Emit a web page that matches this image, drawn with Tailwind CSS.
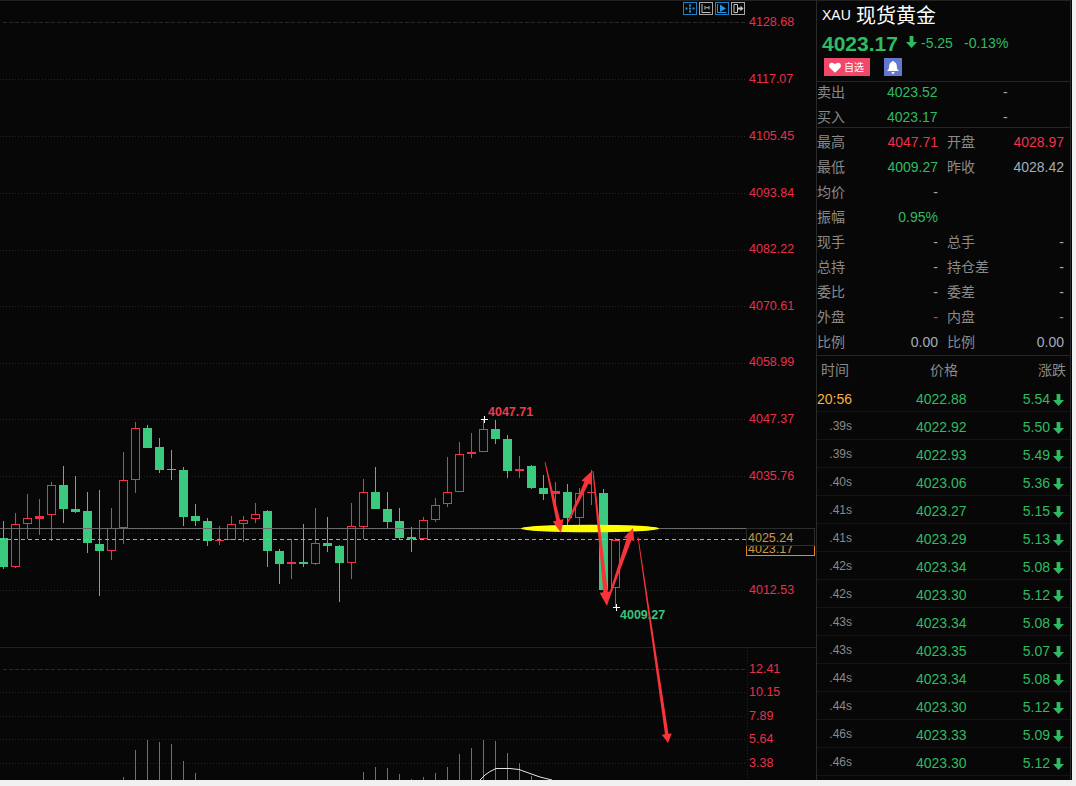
<!DOCTYPE html>
<html lang="zh-CN">
<head>
    <meta charset="UTF-8">
    <title>XAU 现货黄金</title>
    <script src="https://cdn.jsdelivr.net/npm/@tailwindcss/browser@4"></script>
</head>
<body class="bg-[#f0f0f0] [font-family:'Liberation_Sans','Noto_Sans_CJK_SC',sans-serif] text-[14px] overflow-hidden">
<svg class="hidden">
    <symbol id="down" viewBox="0 0 11 12"><path d="M3.6 0h3.8v6H11L5.5 12 0 6h3.6z" fill="#2fbb62"/></symbol>
</svg>

<div class="flex w-[1072px] h-[780px] bg-[#070707] overflow-hidden">

    <!-- Chart -->
    <div class="w-[816px] h-[780px] shrink-0">
        <svg width="816" height="780" class="block">
            <rect x="0" y="0" width="816" height="1" fill="#222"/>
            <g id="grid"></g>
            <g id="candles"></g>
            <g id="volume"></g>
            <path id="macd" d="M480 780L485 775L490 771.5L496 768.5L510 768.5L519 769.5L530 773.5L540 777L552 780" fill="none" stroke="#e5e5e5"/>
            <rect x="0" y="528" width="746" height="1" fill="#6b6b6b"/>
            <line x1="0" y1="539.5" x2="746" y2="539.5" stroke="#d9a24a" stroke-dasharray="4 3"/>

            <!-- high / low markers -->
            <path d="M481 419.5h7M484.5 416v7M613 607.5h7M616.5 604v7" stroke="#fff"/>
            <text x="488" y="416" font-size="12.5" font-weight="700" fill="#ee3a50">4047.71</text>
            <text x="620" y="619" font-size="12.5" font-weight="700" fill="#35c47c">4009.27</text>

            <ellipse cx="590" cy="528.5" rx="69" ry="3.8" fill="#ffff00"/>
            <g id="arrows"></g>

            <g id="axis" font-size="12.5" fill="#e8304a"></g>
            <rect x="746.5" y="541.5" width="68" height="14" fill="#070707" stroke="#e8862a"/>
            <text x="748" y="553" font-size="12.5" fill="#c8974a">4023.17</text>
            <rect x="746.5" y="528.5" width="68" height="17" fill="#070707" stroke="#2c2c2c"/>
            <text x="748" y="541.5" font-size="12.5" fill="#c8974a">4025.24</text>

            <!-- toolbar -->
            <g fill="none">
                <rect x="683.5" y="2.5" width="13" height="12" stroke="#1c7fc9"/>
                <path d="M689 4.5h2v2h-2zM689 10.5h2v2h-2zM685.5 7.5h2v2h-2zM692.5 7.5h2v2h-2zM689 7.5h2v2h-2z" fill="#2a93e0"/>
                <rect x="699.5" y="2.5" width="13" height="12" stroke="#a8a8a8"/>
                <path d="M702 4v8.5h8.5M705 6v3.5M709 6v3.5M706 7.7h2.5" stroke="#c4c4c4"/>
                <rect x="715.5" y="2.5" width="13" height="12" stroke="#1c7fc9"/>
                <path d="M717.5 4v8.5h9" stroke="#2a93e0"/>
                <path d="M720 4.5l6 4-6 3.5z" fill="#2a93e0"/>
                <rect x="731.5" y="2.5" width="13" height="12" stroke="#a8a8a8"/>
                <path d="M734 4.5v8M734 4.5h3.5v8H734" stroke="#c4c4c4"/>
                <path d="M737.5 7.5h3V5.8l3 2.7-3 2.7V9.5h-3z" fill="#c4c4c4"/>
            </g>
        </svg>
    </div>

    <!-- Quote panel -->
    <div class="w-[255px] h-[780px] shrink-0 border-x border-[#2a2a2a] overflow-hidden">

        <div class="h-[82px] border-t border-b border-t-[#222] border-b-[#262626] pl-[5px]">
            <div class="flex items-center h-[29px] text-white">
                <span class="w-[34px]">XAU</span>
                <span class="text-[20px] leading-none">现货黄金</span>
            </div>
            <div class="flex items-center h-[27px] text-[#2fbb62]">
                <span class="text-[21px] font-bold w-[84px]">4023.17</span>
                <svg width="11" height="12" class="mb-[3px]"><use href="#down"/></svg>
                <span class="ml-[4px] w-[43px]">-5.25</span>
                <span>-0.13%</span>
            </div>
            <div class="flex mt-[1px] ml-[2px]">
                <div class="flex items-center w-[46px] h-[18px] bg-[#f0476a] text-white text-[10px] pl-[5px]">
                    <svg width="12" height="11" viewBox="0 0 12 11" class="mr-[3px]"><path d="M6 10.8 1 6C-.6 4.300 0 1.400 2.200.8 3.800.4 5.200 1.200 6 2.400 6.800 1.200 8.200.4 9.800.8 12 1.400 12.600 4.300 11 6z" fill="#fff"/></svg>
                    <span>自选</span>
                </div>
                <div class="flex items-center justify-center w-[18px] h-[18px] bg-[#6478d0] ml-[14px]">
                    <svg width="12" height="13" viewBox="0 0 12 13"><path d="M6 0c.7 0 1 .5 1 1 2 .5 2.800 2 2.800 4 0 2.500.7 3.500 2.200 5H0c1.500-1.500 2.200-2.500 2.200-5 0-2 .8-3.500 2.800-4 0-.5.300-1 1-1zM4.500 11h3c0 1-.7 2-1.500 2s-1.500-1-1.500-2z" fill="#fff"/></svg>
                </div>
            </div>
        </div>

        <div class="h-[46px] border-b border-[#262626] text-[#8a8a8a] overflow-hidden">
            <div class="flex items-center h-[21px]">
                <span class="w-[70px]">卖出</span><span class="w-[51px] text-[#2fbb62]">4023.52</span><span class="ml-[65px] text-[#a8a8a8]">-</span>
            </div>
            <div class="flex items-center h-[25px] mt-[2px]">
                <span class="w-[70px]">买入</span><span class="w-[51px] text-[#2fbb62]">4023.17</span><span class="ml-[65px] text-[#a8a8a8]">-</span>
            </div>
        </div>

        <div class="h-[228px] border-b border-[#262626] text-[#8a8a8a] pt-[2px]">
            <div class="flex items-center h-[25px]">
                <div class="flex justify-between w-[121px]"><span>最高</span><span class="text-[#f0304a]">4047.71</span></div>
                <div class="flex justify-between w-[117px] ml-[9px]"><span>开盘</span><span class="text-[#f0304a]">4028.97</span></div>
            </div>
            <div class="flex items-center h-[25px]">
                <div class="flex justify-between w-[121px]"><span>最低</span><span class="text-[#2fbb62]">4009.27</span></div>
                <div class="flex justify-between w-[117px] ml-[9px]"><span>昨收</span><span class="text-[#a3adb8]">4028.42</span></div>
            </div>
            <div class="flex items-center h-[25px]">
                <div class="flex justify-between w-[121px]"><span>均价</span><span class="text-[#a8a8a8]">-</span></div>
            </div>
            <div class="flex items-center h-[25px]">
                <div class="flex justify-between w-[121px]"><span>振幅</span><span class="text-[#2fbb62]">0.95%</span></div>
            </div>
            <div class="flex items-center h-[25px]">
                <div class="flex justify-between w-[121px]"><span>现手</span><span class="text-[#a8a8a8]">-</span></div>
                <div class="flex justify-between w-[117px] ml-[9px]"><span>总手</span><span class="text-[#a8a8a8]">-</span></div>
            </div>
            <div class="flex items-center h-[25px]">
                <div class="flex justify-between w-[121px]"><span>总持</span><span class="text-[#a8a8a8]">-</span></div>
                <div class="flex justify-between w-[117px] ml-[9px]"><span>持仓差</span><span class="text-[#a8a8a8]">-</span></div>
            </div>
            <div class="flex items-center h-[25px]">
                <div class="flex justify-between w-[121px]"><span>委比</span><span class="text-[#a8a8a8]">-</span></div>
                <div class="flex justify-between w-[117px] ml-[9px]"><span>委差</span><span class="text-[#a8a8a8]">-</span></div>
            </div>
            <div class="flex items-center h-[25px]">
                <div class="flex justify-between w-[121px]"><span>外盘</span><span class="text-[#f0304a]">-</span></div>
                <div class="flex justify-between w-[117px] ml-[9px]"><span>内盘</span><span class="text-[#2fbb62]">-</span></div>
            </div>
            <div class="flex items-center h-[25px]">
                <div class="flex justify-between w-[121px]"><span>比例</span><span class="text-[#a3adb8]">0.00</span></div>
                <div class="flex justify-between w-[117px] ml-[9px]"><span>比例</span><span class="text-[#a3adb8]">0.00</span></div>
            </div>
        </div>

        <!-- Trades -->
        <div class="flex items-center h-[28px] text-[#8a8a8a]">
            <span class="ml-[4px]">时间</span>
            <span class="ml-[81px]">价格</span>
            <span class="ml-[80px]">涨跌</span>
        </div>
        <div id="trades" class="text-[#2fbb62]"></div>
    </div>
</div>

<script>
    // [wick top, wick bottom, body top, body bottom, red?] in 3x crop units, y = 410 + v / 3
    const candles = [
        [333,476,384,471,0],[309,473,343,470,1],[252,388,325,341,1],[267,375,319,326,1],[216,392,226,316,1],
        [168,339,225,297,0],[198,309,297,306,0],[246,429,303,399,0],[240,558,402,423,0],[294,450,355,422,1],
        [126,402,211,353,1],[36,249,55,209,1],[45,114,54,114,0],[84,189,111,180,0],[120,210,177,180,0],
        [171,348,180,321,0],[282,348,318,333,0],[324,408,333,393,0],[348,405,390,393,1],[318,390,343,389,1],
        [318,396,331,341,1],[279,339,313,326,1],[300,471,303,423,0],[417,522,423,462,0],[388,507,457,461,1],
        [342,471,456,462,0],[294,465,400,461,1],[321,426,399,408,0],[405,576,408,459,0],[279,507,349,458,1],
        [207,388,247,350,1],[171,297,246,297,0],[246,354,297,336,0],[294,387,333,384,0],[351,426,381,387,0],
        [321,388,331,387,1],[264,336,286,329,1],[141,291,247,281,1],[96,246,133,245,1],[69,144,126,132,1],
        [27,126,58,125,1],[30,102,57,87,0],[75,204,87,183,0],[138,204,177,183,1],[165,237,168,234,0],
        [195,270,234,252,0],[215,300,244,251,1],[222,345,246,324,0],[235,355,250,323,1],[180,285,247,250,1],
        [237,540,249,540,0],[385,590,390,535,1]
    ];
    const RED = '#f0304f', GREEN = '#3ac97e';
    const py = v => Math.round(410 + v / 3);

    let html = '';
    candles.forEach((c, k) => {
        const x = 3 + 12 * k, col = c[4] ? RED : GREEN;
        const top = py(c[2]), bot = py(c[3]);
        html += `<rect x="${x}" y="${py(c[0])}" width="1" height="${py(c[1]) - py(c[0])}" fill="${col}"/>`;
        if (c[4] && bot - top > 3) {
            html += `<rect x="${x - 3.5}" y="${top + .5}" width="8" height="${bot - top - 1}" fill="#070707" stroke="${col}"/>`;
        } else {
            html += `<rect x="${x - 4}" y="${top}" width="9" height="${Math.max(bot - top, 1)}" fill="${col}"/>`;
        }
    });
    document.getElementById('candles').innerHTML = html;

    // volume bars: [x, top]
    const bars = [[123,777],[135,750],[147,740],[159,742],[171,744],[183,761],[195,773],[363,772],[375,767],[387,768],[399,774],
        [411,779],[423,777],[435,773],[447,767],[459,754],[471,748],[483,740],[495,741],[507,753],[519,763],[531,776]];
    document.getElementById('volume').innerHTML = bars.map(b =>
        `<rect x="${b[0]}" y="${b[1]}" width="1" height="${780 - b[1]}" fill="#e03a55"/>`).join('');

    // grid
    let grid = '';
    [79, 136, 193, 250, 306, 363, 419, 476, 533, 590, 692, 716, 739, 763].forEach(y => {
        grid += `<line x1="0" y1="${y + .5}" x2="746" y2="${y + .5}" stroke="#242424" stroke-dasharray="1 2"/>`;
    });
    [22, 669].forEach(y => {
        grid += `<line x1="3" y1="${y + .5}" x2="746" y2="${y + .5}" stroke="#2a2a2a" stroke-dasharray="4 2"/>`;
    });
    grid += '<rect x="0" y="647" width="816" height="1" fill="#222"/>';
    grid += '<line x1="747.500" y1="648" x2="747.500" y2="780" stroke="#242424" stroke-dasharray="1 2"/>';
    document.getElementById('grid').innerHTML = grid;

    // axis labels
    const labels = [['4128.68',21],['4117.07',78],['4105.45',135],['4093.84',192],['4082.22',248],['4070.61',305],['4058.99',361],
        ['4047.37',418],['4035.76',475],['4012.53',589],['12.41',668],['10.15',691],['7.89',715],['5.64',738],['3.38',762]];
    document.getElementById('axis').innerHTML = labels.map(l =>
        `<text x="749" y="${l[1] + 4.5}">${l[0]}</text>`).join('');

    // hand-drawn arrows, tapered from tail to neck
    function arrow(x1, y1, x2, y2, tail, neck, len, half) {
        const d = Math.hypot(x2 - x1, y2 - y1), ux = (x2 - x1) / d, uy = (y2 - y1) / d, nx = -uy, ny = ux;
        const bx = x2 - ux * len, by = y2 - uy * len;
        const pts = [
            [x1 + nx * tail / 2, y1 + ny * tail / 2], [bx + nx * neck / 2, by + ny * neck / 2], [bx + nx * half, by + ny * half],
            [x2, y2],
            [bx - nx * half, by - ny * half], [bx - nx * neck / 2, by - ny * neck / 2], [x1 - nx * tail / 2, y1 - ny * tail / 2]
        ];
        return `<polygon points="${pts.map(p => p.map(v => v.toFixed(1)).join(',')).join(' ')}" fill="#f8333a"/>`;
    }
    document.getElementById('arrows').innerHTML =
        arrow(545, 462, 561, 533, .8, 4, 13, 5.5) +
        arrow(568, 522, 592, 471, 1.5, 4.5, 13, 5.5) +
        arrow(593, 471, 607, 606, 1, 4.5, 14, 6) +
        arrow(608, 600, 633, 528, 1.5, 5, 12, 5.5) +
        arrow(638, 537, 668, 743, .8, 3.5, 9, 5);

    // trades: [time, price, change]
    const trades = [['.39s','4022.92','5.50'],['.39s','4022.93','5.49'],['.40s','4023.06','5.36'],['.41s','4023.27','5.15'],
        ['.41s','4023.29','5.13'],['.42s','4023.34','5.08'],['.42s','4023.30','5.12'],['.43s','4023.34','5.08'],['.43s','4023.35','5.07'],
        ['.44s','4023.34','5.08'],['.44s','4023.30','5.12'],['.46s','4023.33','5.09'],['.46s','4023.30','5.12']];
    const row = (time, price, chg) => `<div class="flex items-center h-[28px] border-b border-[#141414] pt-[4px]">${time}
        <span class="ml-[64px] w-[51px]">${price}</span>
        <span class="w-[83px] text-right">${chg}</span>
        <svg width="11" height="12" class="ml-[3px]"><use href="#down"/></svg></div>`;
    document.getElementById('trades').innerHTML =
        row('<span class="w-[35px] text-[#f5b041]">20:56</span>', '4022.88', '5.54') +
        trades.map(t => row(`<span class="w-[35px] text-right text-[12px] text-[#8a8a8a] -mt-[3px]">${t[0]}</span>`, t[1], t[2])).join('');
</script>
</body>
</html>
